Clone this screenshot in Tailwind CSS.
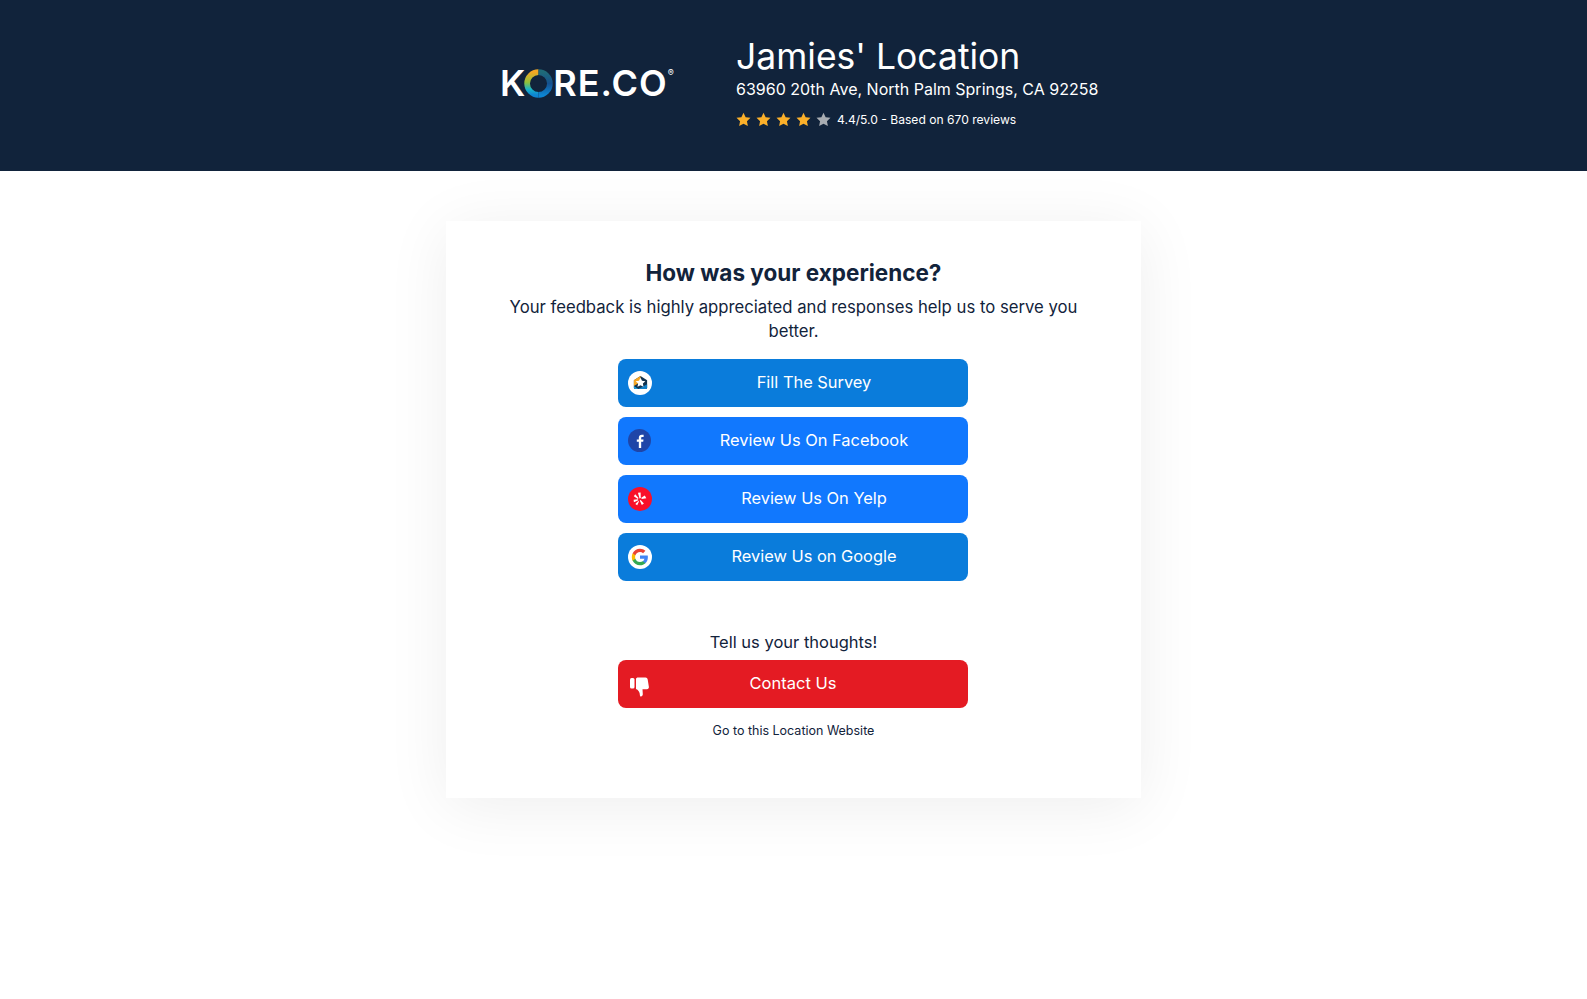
<!DOCTYPE html>
<html lang="en">
<head>
    <meta charset="UTF-8">
    <title>Jamies' Location</title>
    <script src="https://cdn.jsdelivr.net/npm/@tailwindcss/browser@4"></script>
</head>
<body class="min-h-screen bg-white font-['Inter','Liberation_Sans',sans-serif] text-[#12233b]">
    <!-- header -->
    <header class="h-[171px] bg-[#11233b] flex items-center pl-[500px] pb-[5px] text-white">
        <div class="flex items-center w-[236px] h-[32px] font-semibold text-[36px] leading-none">
            <span>K</span>
            <svg class="w-[29px] h-[29px] -ml-[1px] shrink-0" viewBox="0 0 28 28" fill="none">
                <defs>
                    <linearGradient id="ring-left" x1="0" y1="0" x2="0" y2="1">
                        <stop offset="0" stop-color="#f5a623"/>
                        <stop offset="0.45" stop-color="#8fc23a"/>
                        <stop offset="0.75" stop-color="#18b5c8"/>
                        <stop offset="1" stop-color="#0d84d2"/>
                    </linearGradient>
                    <linearGradient id="ring-right" x1="0" y1="0" x2="0" y2="1">
                        <stop offset="0" stop-color="#1f6a78"/>
                        <stop offset="0.5" stop-color="#14508f"/>
                        <stop offset="1" stop-color="#0d84d2"/>
                    </linearGradient>
                </defs>
                <path d="M14 3a11 11 0 0 0 0 22" stroke="url(#ring-left)" stroke-width="5.500"/>
                <path d="M14 3a11 11 0 0 1 0 22" stroke="url(#ring-right)" stroke-width="5.500"/>
            </svg>
            <span class="tracking-[1px]">RE.CO</span>
            <span class="self-start text-[9px] font-normal leading-none mt-[1px]">®</span>
        </div>
        <div>
            <h1 class="text-[35.500px] leading-[40px] font-normal">Jamies' Location</h1>
            <p class="text-[16px] leading-[24px] whitespace-nowrap">63960 20th Ave, North Palm Springs, CA 92258</p>
            <div class="flex items-center mt-[8px] h-[20px]">
                <div class="flex gap-[5px]">
                    <svg class="w-[15px] h-[15px] text-[#fbb02a]" viewBox="0 0 24 24" fill="currentColor"><path d="M12 1l3.400 7.200 7.800 1-5.700 5.400 1.500 7.800L12 18.600l-7 3.800 1.500-7.800L.8 9.200l7.800-1z"/></svg>
                    <svg class="w-[15px] h-[15px] text-[#fbb02a]" viewBox="0 0 24 24" fill="currentColor"><path d="M12 1l3.400 7.200 7.800 1-5.700 5.400 1.500 7.800L12 18.600l-7 3.800 1.500-7.800L.8 9.200l7.800-1z"/></svg>
                    <svg class="w-[15px] h-[15px] text-[#fbb02a]" viewBox="0 0 24 24" fill="currentColor"><path d="M12 1l3.400 7.200 7.800 1-5.700 5.400 1.500 7.800L12 18.600l-7 3.800 1.500-7.800L.8 9.200l7.800-1z"/></svg>
                    <svg class="w-[15px] h-[15px] text-[#fbb02a]" viewBox="0 0 24 24" fill="currentColor"><path d="M12 1l3.400 7.200 7.800 1-5.700 5.400 1.500 7.800L12 18.600l-7 3.800 1.500-7.800L.8 9.200l7.800-1z"/></svg>
                    <svg class="w-[15px] h-[15px] text-[#a9adb2]" viewBox="0 0 24 24" fill="currentColor"><path d="M12 1l3.400 7.200 7.800 1-5.700 5.400 1.500 7.800L12 18.600l-7 3.800 1.500-7.800L.8 9.200l7.800-1z"/></svg>
                </div>
                <span class="ml-[6px] text-[12.100px] leading-[20px] pt-[1px]">4.4/5.0 - Based on 670 reviews</span>
            </div>
        </div>
    </header>

    <!-- card -->
    <main class="flex justify-center pt-[50px]">
        <section class="w-[695px] h-[577px] bg-white shadow-[0_8px_60px_rgba(0,0,0,0.07)] flex flex-col items-center pt-[37px]">
            <h2 class="text-[22.500px] leading-[30px] font-bold">How was your experience?</h2>
            <p class="w-[600px] mt-[7px] text-[16.700px] leading-[24px] text-center">Your feedback is highly appreciated and responses help us to serve you better.</p>

            <div class="w-[350px] mr-[1px] mt-[16px] flex flex-col gap-[10px]">
                <a class="h-[48px] rounded-[8px] bg-[#0a7cdb] text-white flex items-center pl-[10px] pb-[1px] text-[16.400px]">
                    <span class="w-[24px] h-[24px] rounded-full bg-white flex items-center justify-center shrink-0">
                        <svg class="w-[15px] h-[15px]" viewBox="0 0 17 17"><path d="M8.500 1 16 6v8.500a1.500 1.500 0 0 1-1.500 1.500h-12A1.500 1.500 0 0 1 1 14.500V6z" fill="#12334f"/><path d="M1 6l7.500-5v7L1 12.500z" fill="#f5a623"/><path d="M1 12.500 6 16H2.500A1.500 1.500 0 0 1 1 14.500z" fill="#1b9ad6"/><path d="M6 16h8.500a1.500 1.500 0 0 0 1.500-1.500V10.500z" fill="#0f7fc9"/><path d="m8.500 3 1.700 3.500 3.800.5-2.800 2.600.7 3.800-3.400-1.800-3.400 1.800.7-3.800L3 7l3.800-.5z" fill="#fff"/></svg>
                    </span>
                    <span class="flex-1 text-center pl-[8px]">Fill The Survey</span>
                </a>
                <a class="h-[48px] rounded-[8px] bg-[#1178fe] text-white flex items-center pl-[10px] pb-[1px] text-[16.400px]">
                    <span class="w-[23px] h-[23px] rounded-full bg-[#1f45a8] flex items-center justify-center shrink-0">
                        <svg class="w-[16px] h-[16px]" viewBox="0 0 15 15"><path d="M8.600 14V8.300h1.900l.3-2.200H8.600V4.700c0-.6.200-1 1.100-1h1.200V1.700c-.2 0-.9-.1-1.700-.1-1.700 0-2.800 1-2.800 2.900v1.600H4.500v2.200h1.900V14z" fill="#fff"/></svg>
                    </span>
                    <span class="flex-1 text-center pl-[9px]">Review Us On Facebook</span>
                </a>
                <a class="h-[48px] rounded-[8px] bg-[#1178fe] text-white flex items-center pl-[10px] pb-[1px] text-[16.400px]">
                    <span class="w-[24px] h-[24px] rounded-full bg-[#f8102a] flex items-center justify-center shrink-0">
                        <svg class="w-[14px] h-[14px]" viewBox="0 0 14 14" fill="#fff"><path d="M5 .8 7.600.4l.2 5.600-1.300.4z"/><path d="M.8 4.300l1.400-2 3.300 3.700-.6 1z"/><path d="M.9 10.200l-.3-2.500 4.300-.4.500 1z"/><path d="M6.800 8.500l.9-.5 3.200 3.400-2.100 1.500z"/><path d="M8.300 5.800l3.500-2.200 1.500 2.600-4.600.8z"/><path d="M4.200 13.200l-1.900-1.300 3.100-2.900.6.600z"/></svg>
                    </span>
                    <span class="flex-1 text-center pl-[8px]">Review Us On Yelp</span>
                </a>
                <a class="h-[48px] rounded-[8px] bg-[#0a7cdb] text-white flex items-center pl-[10px] pb-[1px] text-[16.400px]">
                    <span class="w-[24px] h-[24px] rounded-full bg-white flex items-center justify-center shrink-0">
                        <svg class="w-[18px] h-[18px]" viewBox="0 0 24 24"><path d="M22.500 12.200c0-.8-.1-1.500-.2-2.200H12v4.200h5.900c-.3 1.400-1 2.500-2.200 3.300v2.700h3.500c2.100-1.900 3.300-4.700 3.300-8z" fill="#4285f4"/><path d="M12 23c3 0 5.400-1 7.200-2.700l-3.500-2.700c-1 .7-2.200 1.100-3.700 1.100-2.900 0-5.300-1.900-6.200-4.500H2.200v2.800C4 20.500 7.700 23 12 23z" fill="#34a853"/><path d="M5.800 14.200c-.5-1.400-.5-3 0-4.400V7H2.200c-1.500 3-1.500 7 0 10z" fill="#fbbc05"/><path d="M12 5.300c1.600 0 3 .6 4.100 1.600l3.100-3.100C17.400 2.100 14.900 1 12 1 7.700 1 4 3.500 2.200 7l3.600 2.800C6.700 7.200 9.100 5.300 12 5.300z" fill="#ea4335"/></svg>
                    </span>
                    <span class="flex-1 text-center pl-[8px]">Review Us on Google</span>
                </a>
            </div>

            <p class="mt-[49px] text-[16.500px] leading-[24px]">Tell us your thoughts!</p>
            <a class="w-[350px] mr-[1px] h-[48px] mt-[6px] pb-[1px] rounded-[8px] bg-[#e41b23] text-white flex items-center justify-center text-[16.500px] relative">
                <svg class="absolute left-[12px] top-[17px] w-[19px] h-[20px]" viewBox="0 0 19 20" fill="#fff"><rect x="0" y="1" width="4.500" height="10.500" rx="1.500"/><path d="M6 2C6 1 7 .500 8 .500h7.500c1.200 0 2 .8 2.200 2l1.200 7.500c.1 1.200-.7 2.200-2 2.200h-4.400l.3 5c0 1.200-.8 2.300-1.800 2.300-.7 0-1-.5-1.100-1.300C10 15 8 12.800 6 12z"/></svg>
                <span>Contact Us</span>
            </a>
            <a class="mt-[14px] text-[12.500px] leading-[18px]">Go to this Location Website</a>
        </section>
    </main>
</body>
</html>
